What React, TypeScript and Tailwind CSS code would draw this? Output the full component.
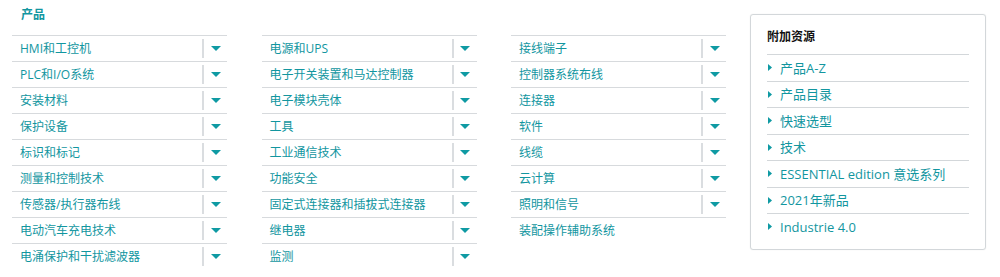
const columns: { label: string; menu: boolean }[][] = [
  [
    { label: "HMI和工控机", menu: true },
    { label: "PLC和I/O系统", menu: true },
    { label: "安装材料", menu: true },
    { label: "保护设备", menu: true },
    { label: "标识和标记", menu: true },
    { label: "测量和控制技术", menu: true },
    { label: "传感器/执行器布线", menu: true },
    { label: "电动汽车充电技术", menu: true },
    { label: "电涌保护和干扰滤波器", menu: true },
  ],
  [
    { label: "电源和UPS", menu: true },
    { label: "电子开关装置和马达控制器", menu: true },
    { label: "电子模块壳体", menu: true },
    { label: "工具", menu: true },
    { label: "工业通信技术", menu: true },
    { label: "功能安全", menu: true },
    { label: "固定式连接器和插拔式连接器", menu: true },
    { label: "继电器", menu: true },
    { label: "监测", menu: true },
  ],
  [
    { label: "接线端子", menu: true },
    { label: "控制器系统布线", menu: true },
    { label: "连接器", menu: true },
    { label: "软件", menu: true },
    { label: "线缆", menu: true },
    { label: "云计算", menu: true },
    { label: "照明和信号", menu: true },
    { label: "装配操作辅助系统", menu: false },
  ],
];

const resources = [
  "产品A-Z",
  "产品目录",
  "快速选型",
  "技术",
  "ESSENTIAL edition 意选系列",
  "2021年新品",
  "Industrie 4.0",
];

const font = "font-['Open_Sans','Noto_Sans_CJK_SC',sans-serif]";

function Row({ label, menu }: { label: string; menu: boolean }) {
  return (
    <div className="flex h-[26px] items-center border-t border-[#d7dadd]">
      <a className="flex-1 pl-[8px] text-[12px] leading-[16px] whitespace-nowrap text-[#12969f]">
        {label}
      </a>
      {menu && (
        <div className="flex h-[19px] w-[25px] items-center justify-center border-l-2 border-[#dadde0]">
          <svg width="10" height="5" viewBox="0 0 10 5">
            <path d="M0 0 H10 L5 5 Z" fill="#0f9aa3" />
          </svg>
        </div>
      )}
    </div>
  );
}

export default function App() {
  return (
    <div className={`flex w-[1000px] h-[277px] bg-white ${font}`}>
      <div className="pl-[12px] w-[726px] shrink-0">
        <h2 className="h-[35px] pl-[9px] pt-[6px] text-[12px] leading-[18px] font-bold text-[#12969f]">
          产品
        </h2>
        <div className="grid grid-cols-[215px_215px_215px] gap-x-[34.5px]">
          {columns.map((col, i) => (
            <div key={i} className="flex flex-col">
              {col.map((item) => (
                <Row key={item.label} label={item.label} menu={item.menu} />
              ))}
            </div>
          ))}
        </div>
      </div>

      {/* 附加资源 */}
      <div className="ml-[24px] mt-[14px] h-[236px] w-[236px] rounded-[3px] border border-[#d3d7da] px-[16px] pt-[12px] shadow-[0_0_1px_rgba(0,0,0,0.15)]">
        <h3 className="h-[27px] pt-[1px] text-[12px] leading-[18px] font-bold text-[#111]">附加资源</h3>
        <ul>
          {resources.map((r) => (
            <li
              key={r}
              className="flex h-[26.5px] items-center border-t border-[#d3d7da]"
            >
              <svg width="4" height="7" viewBox="0 0 4 7" className="ml-[1px] mr-[8px]">
                <path d="M0 0 L4 3.5 L0 7 Z" fill="#0f9aa3" />
              </svg>
              <a className="text-[13px] leading-[18px] whitespace-nowrap text-[#12969f]">{r}</a>
            </li>
          ))}
        </ul>
      </div>
    </div>
  );
}
